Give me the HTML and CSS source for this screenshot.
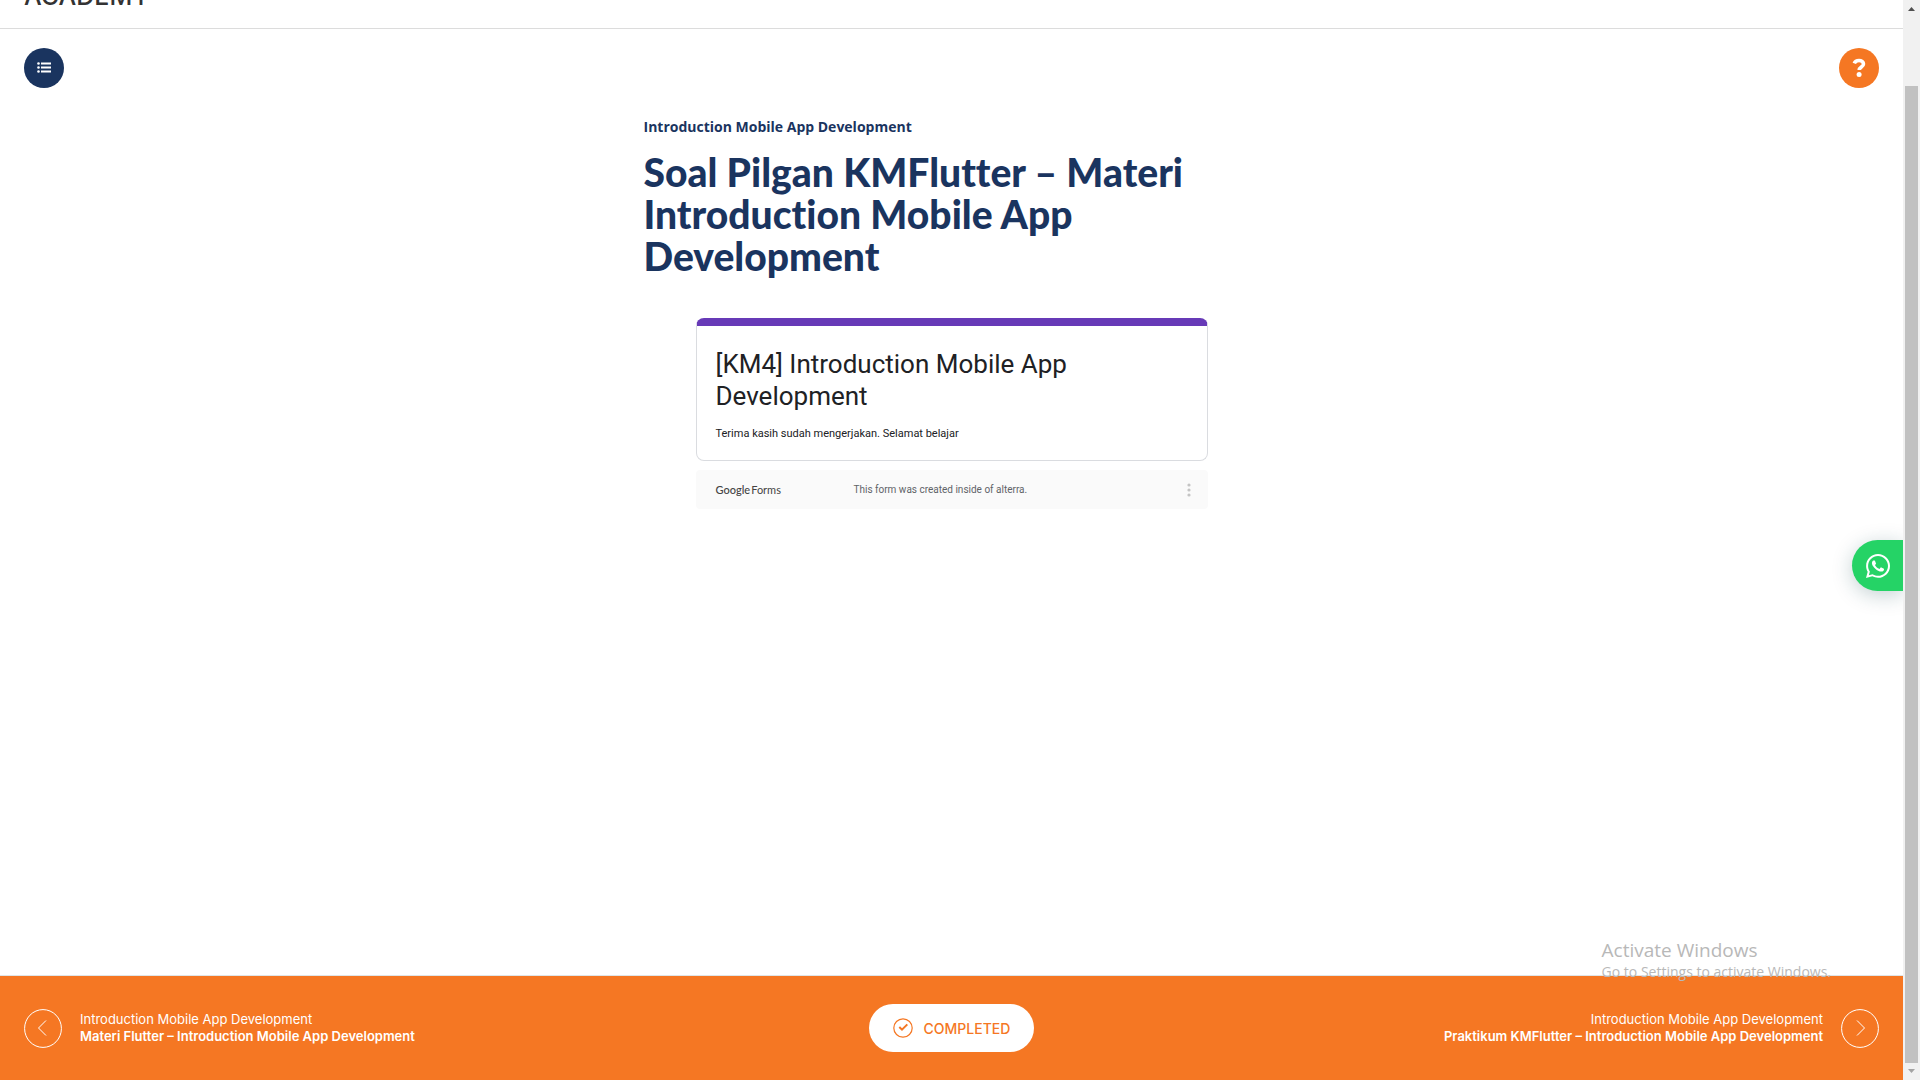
FILE: index.html
```html
<!DOCTYPE html>
<html lang="id">
<head>
<meta charset="utf-8">
<meta name="viewport" content="width=device-width, initial-scale=1">
<title>Soal Pilgan KMFlutter – Materi Introduction Mobile App Development</title>
<link rel="stylesheet" href="styles.css">
</head>
<body>
<div class="page">
  <header class="site-header"><a class="brand" href="#">ACADEMY</a></header>
  <div class="toolbar">
    <button class="round-button round-button--navy" type="button" aria-label="Course outline">
      <svg width="14" height="12" viewBox="0 0 14 12" fill="currentColor" aria-hidden="true"><circle cx="1.5" cy="1.5" r="1.3"/><circle cx="1.5" cy="5.5" r="1.3"/><circle cx="1.5" cy="9.5" r="1.3"/><path d="M4 .6h10v2H4zM4 4.6h10v2H4zM4 8.6h10v2H4z"/></svg>
    </button>
    <button class="round-button round-button--orange" type="button" aria-label="Help">
      <svg width="14" height="20" viewBox="0 0 14 20" fill="none" stroke="currentColor" aria-hidden="true"><path d="M2.3 5.4C3 3.4 4.8 2.5 7 2.5c2.500 0 4.500 1.300 4.500 3.500 0 3-4.300 3.100-4.300 6.100" stroke-width="3.600"/><circle cx="7.100" cy="16.600" r="2.500" fill="currentColor" stroke="none"/></svg>
    </button>
  </div>
  <main class="lesson">
    <p class="course-name">Introduction Mobile App Development</p>
    <h1 class="lesson-title">Soal Pilgan KMFlutter – Materi Introduction Mobile App Development</h1>
    <div class="form">
      <section class="form-card">
        <h2 class="form-title">[KM4] Introduction Mobile App Development</h2>
        <p class="form-text">Terima kasih sudah mengerjakan. Selamat belajar</p>
      </section>
      <div class="form-footer">
        <a class="form-logo" href="#"><b>Google</b><span>Forms</span></a>
        <span class="form-note">This form was created inside of alterra.</span>
        <button class="form-menu" type="button" aria-label="More options">
          <svg width="4" height="14" viewBox="0 0 4 14" fill="currentColor" aria-hidden="true"><circle cx="2" cy="2" r="1.600"/><circle cx="2" cy="7" r="1.600"/><circle cx="2" cy="12" r="1.600"/></svg>
        </button>
      </div>
    </div>
  </main>
  <footer class="lesson-nav">
    <a class="nav-link" href="#">
      <svg class="nav-arrow" viewBox="0 0 38 39" fill="none" stroke="currentColor" aria-hidden="true"><ellipse cx="19" cy="19.500" rx="18.400" ry="18.900"/><path d="M22 11.500l-7.500 7.500 7.500 7.500"/></svg>
      <span class="nav-text"><span>Introduction Mobile App Development</span><strong>Materi Flutter – Introduction Mobile App Development</strong></span>
    </a>
    <button class="complete-button" type="button">
      <svg width="20" height="20" viewBox="0 0 20 20" fill="none" stroke="currentColor" aria-hidden="true"><circle cx="10" cy="10" r="9.200" stroke-width="1.200"/><path d="M6.300 9l2.700 2.700 5.300-5.300" stroke-width="2"/></svg>
      COMPLETED
    </button>
    <a class="nav-link nav-link--next" href="#">
      <span class="nav-text"><span>Introduction Mobile App Development</span><strong>Praktikum KMFlutter – Introduction Mobile App Development</strong></span>
      <svg class="nav-arrow" viewBox="0 0 38 39" fill="none" stroke="currentColor" aria-hidden="true"><ellipse cx="19" cy="19.500" rx="18.400" ry="18.900"/><path d="M16 11.500l7.500 7.500-7.500 7.500"/></svg>
    </a>
  </footer>
  <a class="whatsapp" href="#" aria-label="WhatsApp">
    <svg width="24" height="24" viewBox="0 0 448 448" fill="currentColor" aria-hidden="true"><path transform="translate(0 -32)" d="M380.9 97.1C339 55.1 283.200 32 223.900 32c-122.400 0-222 99.600-222 222 0 39.100 10.200 77.300 29.600 111L0 480l117.700-30.900c32.400 17.700 68.900 27 106.100 27h.1c122.300 0 224.100-99.600 224.100-222 0-59.300-25.200-115-67.100-157zm-157 341.600c-33.200 0-65.700-8.900-94-25.700l-6.700-4-69.800 18.300L72 359.200l-4.400-7c-18.500-29.400-28.200-63.300-28.200-98.200 0-101.700 82.800-184.500 184.600-184.500 49.300 0 95.600 19.200 130.400 54.100 34.800 34.900 56.200 81.200 56.100 130.500 0 101.800-84.900 184.600-186.600 184.600zm101.200-138.200c-5.500-2.800-32.800-16.200-37.900-18-5.100-1.900-8.800-2.800-12.500 2.800-3.700 5.600-14.300 18-17.600 21.800-3.200 3.700-6.500 4.200-12 1.400-32.600-16.300-54-29.100-75.500-66-5.700-9.800 5.700-9.100 16.300-30.300 1.800-3.700.9-6.900-.5-9.700-1.400-2.800-12.500-30.100-17.100-41.200-4.500-10.800-9.100-9.300-12.500-9.500-3.200-.2-6.900-.2-10.600-.2-3.700 0-9.700 1.400-14.800 6.900-5.100 5.600-19.400 19-19.400 46.300 0 27.300 19.900 53.700 22.600 57.400 2.800 3.700 39.100 59.700 94.800 83.800 35.200 15.200 49 16.500 66.600 13.900 10.700-1.600 32.800-13.400 37.400-26.400 4.600-13 4.600-24.100 3.200-26.400-1.300-2.500-5-3.900-10.500-6.600z"/></svg>
  </a>
  <div class="watermark"><span class="watermark-title">Activate Windows</span><span>Go to Settings to activate Windows.</span></div>
</div>
<div class="scrollbar" aria-hidden="true">
  <svg width="17" height="17" viewBox="0 0 17 17" fill="#505050"><path d="M5 11l3.500-4 3.500 4z"/></svg>
  <div class="scroll-track"><div class="scroll-thumb"></div></div>
  <svg width="17" height="17" viewBox="0 0 17 17" fill="#a3a3a3"><path d="M5 6l3.500 4L12 6z"/></svg>
</div>
</body>
</html>
```
FILE: styles.css
```css
* { box-sizing: border-box; }
body { margin: 0; min-height: 100vh; display: flex; background: #fff; font-family: "Open Sans", sans-serif; color: #1a345f; }
a { color: inherit; text-decoration: none; }
button { border: 0; padding: 0; cursor: pointer; font: inherit; }
h1, h2, p { margin: 0; }

.page { position: relative; flex: 1; min-width: 0; display: flex; flex-direction: column; overflow: hidden; }
.site-header { height: 29px; flex: none; display: flex; align-items: flex-end; overflow: hidden; padding: 0 24px 16px; border-bottom: 1px solid #dcdcdc; }
.brand { color: #333; font: 500 25px/32px Inter, sans-serif; }

.toolbar { display: flex; justify-content: space-between; padding: 19px 24px 0; }
.round-button { width: 40px; height: 40px; border-radius: 50%; display: flex; align-items: center; justify-content: center; color: #fff; }
.round-button--navy { background: #1a345f; }
.round-button--orange { background: #f57723; }

.lesson { flex: 1; width: 100%; max-width: 616px; margin: 0 auto; padding-top: 28px; }
.course-name { font-size: 14px; font-weight: 700; line-height: 22px; }
.lesson-title { margin-top: 13px; font: 900 39px/42px Lato, sans-serif; font-variant-ligatures: none; }

.form { max-width: 512px; margin: 41px auto 40px; font-family: Roboto, sans-serif; }
.form-card { padding: 22px 19px 17px; border: 1px solid #dadce0; border-top: 8px solid #673ab7; border-radius: 8px; color: #202124; }
.form-title { font-size: 26px; font-weight: 400; line-height: 32px; }
.form-text { margin-top: 13px; font-size: 11px; line-height: 18px; }
.form-footer { display: flex; align-items: center; height: 39px; margin-top: 9px; padding: 0 17px 0 20px; border-radius: 4px; background: #fafafa; color: #5f6368; }
.form-logo { width: 138px; display: flex; gap: 1px; color: #444; font: 11px/16px Lato, sans-serif; }
.form-logo b { font-weight: 500; }
.form-note { flex: 1; font-size: 10px; }
.form-menu { display: flex; background: none; color: #c4c4c4; }

.lesson-nav { display: grid; grid-template-columns: 1fr auto 1fr; align-items: center; min-height: 105px; padding: 0 24px; border-top: 1px solid #dfe5e8; background: #f57723; color: #fff; font: 13px/17px Inter, sans-serif; }
.nav-link { display: flex; align-items: center; gap: 18px; }
.nav-link--next { justify-content: flex-end; text-align: right; }
.nav-arrow { flex: none; width: 38px; height: 39px; }
.nav-text { display: flex; flex-direction: column; }
.nav-text strong { font-weight: 600; }
.complete-button { display: flex; align-items: center; gap: 11px; height: 48px; padding: 0 24px; border-radius: 24px; background: #fff; color: #f57723; font-size: 14px; font-weight: 500; }

.whatsapp { position: absolute; right: 0; top: 50%; display: flex; align-items: center; width: 51px; height: 51px; padding-left: 14px; border-radius: 26px 0 0 26px; background: #25d366; color: #fff; box-shadow: 0 4px 20px rgba(20, 70, 80, .25); }
.watermark { position: absolute; right: 72px; bottom: 98px; display: flex; flex-direction: column; color: #b8b8b8; font-size: 14px; line-height: 20px; pointer-events: none; }
.watermark-title { font-size: 19px; line-height: 24px; }

.scrollbar { flex: none; width: 17px; display: flex; flex-direction: column; background: #f1f1f1; }
.scroll-track { flex: 1; display: flex; flex-direction: column; justify-content: flex-end; padding: 0 2px; }
.scroll-thumb { height: 93.4%; background: #c1c1c1; }
```
